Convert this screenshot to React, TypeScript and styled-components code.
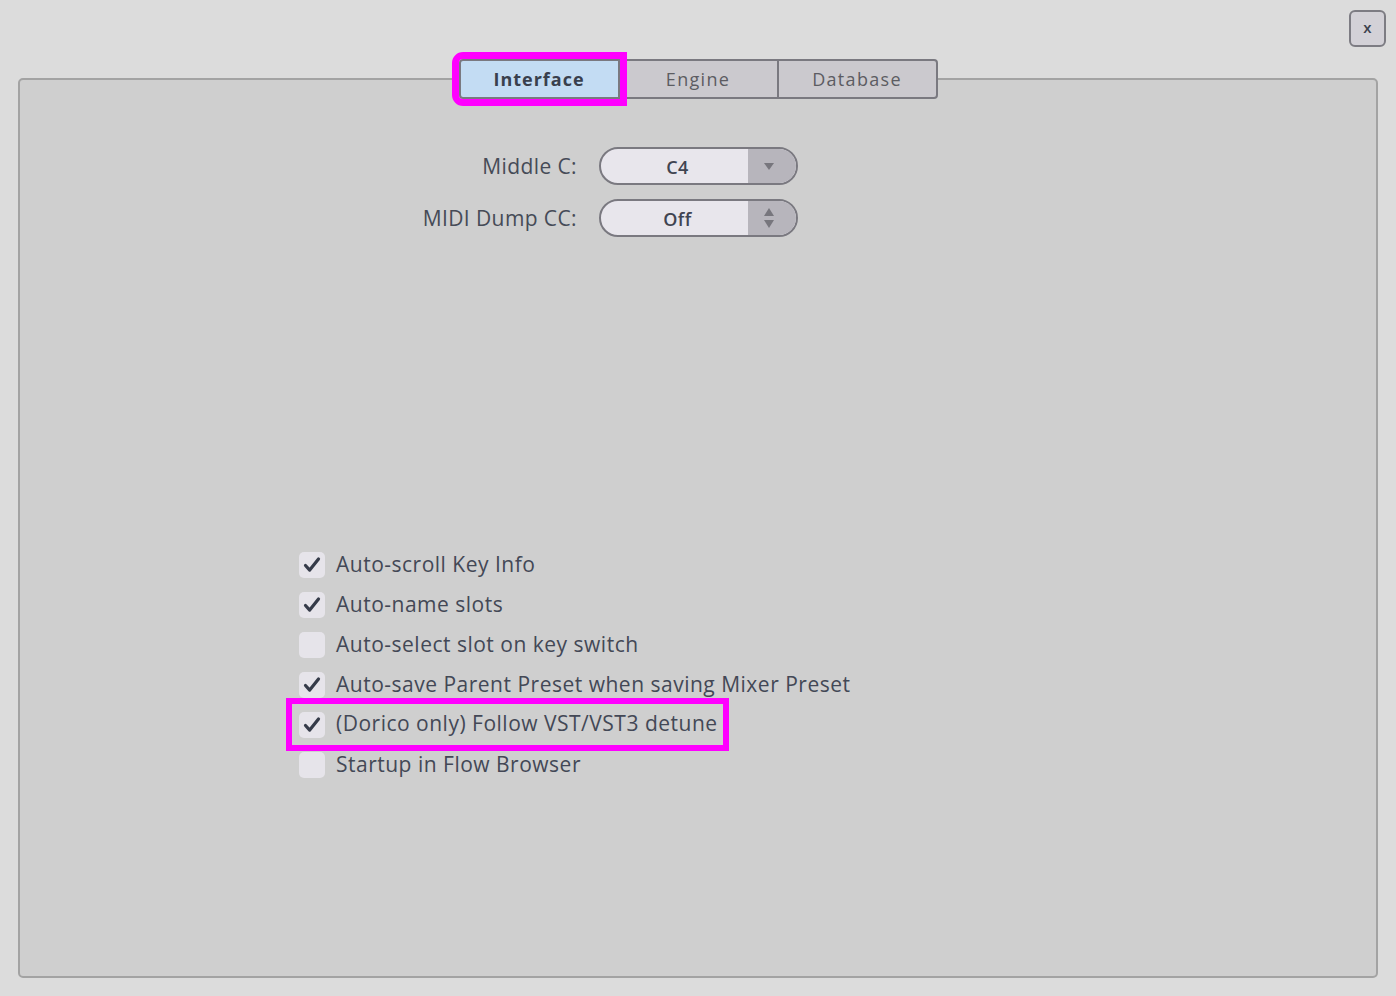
import React from "react";
import styled, { createGlobalStyle } from "styled-components";

const GlobalStyle = createGlobalStyle`
  html, body {
    margin: 0;
    padding: 0;
    background: #dcdcdc;
  }
  body {
    font-family: "Open Sans", "Noto Sans", sans-serif;
    color: #3c4250;
  }
`;

const Window = styled.div`
  width: 1396px;
  height: 996px;
  box-sizing: border-box;
  padding: 10px 18px 18px 18px;
  display: flex;
  flex-direction: column;
`;

const TopBar = styled.div`
  display: flex;
  justify-content: flex-end;
  margin-right: -8px;
`;

const CloseButton = styled.button`
  width: 37px;
  height: 37px;
  box-sizing: border-box;
  border: 2px solid #7d7c83;
  border-radius: 6px;
  background: #d3d1d7;
  color: #3c414d;
  font-family: "Open Sans", sans-serif;
  font-size: 15px;
  font-weight: 600;
  line-height: 1;
  padding: 0 0 2px;
  cursor: pointer;
`;

const Panel = styled.div`
  flex: 1;
  margin-top: 31px;
  border: 2px solid #a3a3a3;
  border-radius: 5px;
  background: #cfcfcf;
  display: flex;
  flex-direction: column;
`;

const TabBar = styled.div`
  display: flex;
  justify-content: center;
  margin-top: -21px;
`;

const Tab = styled.button<{ $active?: boolean }>`
  width: 161px;
  height: 40px;
  box-sizing: border-box;
  border: 2px solid #7a7980;
  margin-left: -2px;
  background: ${(p) => (p.$active ? "#c3dcf3" : "#cbc9ce")};
  color: ${(p) => (p.$active ? "#39404d" : "#5c5c62")};
  font-family: "Open Sans", sans-serif;
  font-size: 18px;
  font-weight: ${(p) => (p.$active ? 700 : 500)};
  letter-spacing: ${(p) => (p.$active ? "1px" : "1.3px")};
  padding: 0;
  &:first-child {
    margin-left: 0;
    border-radius: 4px 0 0 4px;
  }
  &:last-child {
    border-radius: 0 4px 4px 0;
  }
  ${(p) => (p.$active ? "outline: 7px solid #ff00ff;" : "")}
  position: relative;
  z-index: ${(p) => (p.$active ? 1 : 0)};
`;

const FormGrid = styled.div`
  display: grid;
  grid-template-columns: 220px 199px;
  column-gap: 22px;
  row-gap: 14px;
  margin: 48px 0 0 337px;
  align-items: center;
`;

const FieldLabel = styled.label`
  text-align: right;
  font-size: 21px;
  letter-spacing: 0.4px;
  color: #464b57;
`;

const Select = styled.div`
  height: 38px;
  box-sizing: border-box;
  border: 2px solid #7a7980;
  border-radius: 19px;
  background: #e8e6ec;
  display: flex;
  overflow: hidden;
`;

const SelectValue = styled.div`
  flex: 1;
  display: flex;
  align-items: center;
  justify-content: center;
  font-size: 18px;
  font-weight: 600;
  letter-spacing: 0.5px;
  color: #3f4451;
  padding: 1px 0 0 6px;
`;

const SelectArrow = styled.div`
  width: 48px;
  background: #b7b5bc;
  display: flex;
  align-items: center;
  justify-content: center;
  padding-right: 6px;
  box-sizing: border-box;
`;

const CheckList = styled.div`
  margin: 308px 0 0 279px;
  display: flex;
  flex-direction: column;
  align-items: flex-start;
`;

const CheckRow = styled.label<{ $highlight?: boolean }>`
  height: 40px;
  display: inline-flex;
  align-items: center;
  gap: 11px;
  font-size: 21px;
  letter-spacing: 0.5px;
  color: #434856;
  ${(p) =>
    p.$highlight
      ? `
    outline: 6px solid #ff00ff;
    margin: -1px -5px 0 -7px;
    padding: 0 5px 0 7px;
    height: 41px;
  `
      : ""}
`;

const Box = styled.span`
  width: 26px;
  height: 26px;
  border-radius: 5px;
  background: #e6e4ea;
  display: flex;
  align-items: center;
  justify-content: center;
  flex-shrink: 0;
`;

const Label = styled.span`
  line-height: 1;
  padding-bottom: 2px;
`;

const DownArrow = () => (
  <svg width="12" height="10" viewBox="0 0 12 10">
    <path d="M1 2h10L6 9z" fill="#77767d" />
  </svg>
);

const SpinArrows = () => (
  <svg width="12" height="22" viewBox="0 0 12 22">
    <path d="M6 1l5 8H1z" fill="#77767d" />
    <path d="M1 13h10l-5 8z" fill="#77767d" />
  </svg>
);

const Check = () => (
  <svg width="20" height="20" viewBox="0 0 20 20">
    <path
      d="M3.5 10.5l4.2 4.6L16.5 4"
      fill="none"
      stroke="#353b49"
      strokeWidth="3.2"
      strokeLinecap="round"
      strokeLinejoin="round"
    />
  </svg>
);

const options = [
  { label: "Auto-scroll Key Info", checked: true },
  { label: "Auto-name slots", checked: true },
  { label: "Auto-select slot on key switch", checked: false },
  { label: "Auto-save Parent Preset when saving Mixer Preset", checked: true },
  { label: "(Dorico only) Follow VST/VST3 detune", checked: true, highlight: true },
  { label: "Startup in Flow Browser", checked: false },
];

export default function App() {
  return (
    <>
      <GlobalStyle />
      <Window>
        <TopBar>
          <CloseButton type="button">x</CloseButton>
        </TopBar>
        <Panel>
          <TabBar>
            <Tab type="button" $active>
              Interface
            </Tab>
            <Tab type="button">Engine</Tab>
            <Tab type="button">Database</Tab>
          </TabBar>

          <FormGrid>
            <FieldLabel>Middle C:</FieldLabel>
            <Select>
              <SelectValue>C4</SelectValue>
              <SelectArrow>
                <DownArrow />
              </SelectArrow>
            </Select>
            <FieldLabel>MIDI Dump CC:</FieldLabel>
            <Select>
              <SelectValue>Off</SelectValue>
              <SelectArrow>
                <SpinArrows />
              </SelectArrow>
            </Select>
          </FormGrid>

          <CheckList>
            {options.map((o) => (
              <CheckRow key={o.label} $highlight={o.highlight}>
                <Box>{o.checked && <Check />}</Box>
                <Label>{o.label}</Label>
              </CheckRow>
            ))}
          </CheckList>
        </Panel>
      </Window>
    </>
  );
}
